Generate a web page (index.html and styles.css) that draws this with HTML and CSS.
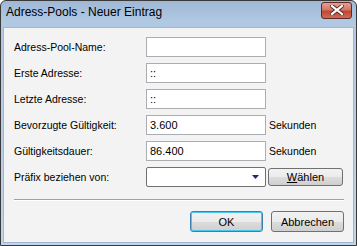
FILE: index.html
```html
<!DOCTYPE html>
<html lang="de">
<head>
    <meta charset="UTF-8">
    <title>Adress-Pools - Neuer Eintrag</title>
    <link rel="stylesheet" href="styles.css">
</head>
<body>
    <div class="window">
        <div class="titlebar">
            <span class="title">Adress-Pools - Neuer Eintrag</span>
            <button class="close" type="button" aria-label="Schließen">
                <svg width="14" height="10" viewBox="0 0 14 10">
                    <path d="M2 1 L12 9 M12 1 L2 9" stroke="#5a2a2a" stroke-width="4" stroke-linecap="square"/>
                    <path d="M2 1 L12 9 M12 1 L2 9" stroke="#fff" stroke-width="2.2" stroke-linecap="square"/>
                </svg>
            </button>
        </div>

        <div class="client">
            <form class="fields">
                <label for="poolName">Adress-Pool-Name:</label>
                <input type="text" id="poolName" class="field">
                <span></span>

                <label for="firstAddr">Erste Adresse:</label>
                <input type="text" id="firstAddr" class="field" value="::">
                <span></span>

                <label for="lastAddr">Letzte Adresse:</label>
                <input type="text" id="lastAddr" class="field" value="::">
                <span></span>

                <label for="preferred">Bevorzugte Gültigkeit:</label>
                <input type="text" id="preferred" class="field" value="3.600">
                <span class="unit">Sekunden</span>

                <label for="valid">Gültigkeitsdauer:</label>
                <input type="text" id="valid" class="field" value="86.400">
                <span class="unit">Sekunden</span>

                <label for="prefix">Präfix beziehen von:</label>
                <div class="combo" id="prefix">
                    <svg class="arrow" width="7" height="4" viewBox="0 0 7 4"><path d="M0 0 H7 L3.5 4 Z" fill="#1c2c6c"/></svg>
                </div>
                <button type="button" class="btn btn-small"><u>W</u>ählen</button>
            </form>

            <hr class="separator">

            <div class="actions">
                <button type="button" class="btn btn-default">OK</button>
                <button type="button" class="btn">Abbrechen</button>
            </div>
        </div>
    </div>
</body>
</html>
```

FILE: styles.css
```css
body {
    margin: 0;
    padding: 0;
    font-family: "Liberation Sans", Arial, sans-serif;
    font-size: 11px;
    color: #000;
    background: #fff;
}

.window {
    width: 357px;
    height: 246px;
    box-sizing: border-box;
    border: 1px solid #3a3a3a;
    border-radius: 6px 6px 0 0;
    background: linear-gradient(to bottom, #9fb8d6 0px, #b0c8e2 20px, #c0d4ea 100%);
    display: flex;
    flex-direction: column;
}

.titlebar {
    height: 26px;
    display: flex;
    align-items: center;
    justify-content: space-between;
    padding: 0 4px 0 5px;
    flex-shrink: 0;
}

.title {
    font-size: 12px;
    color: #000;
    margin-top: -4px;
}

.close {
    width: 31px;
    height: 17px;
    margin-top: -8px;
    padding: 0;
    border: 1px solid #5e2a2a;
    border-radius: 3px;
    background: linear-gradient(to bottom, #e3a093 0%, #d27766 45%, #c0472f 55%, #cf6a55 100%);
    display: flex;
    align-items: center;
    justify-content: center;
}

.client {
    flex: 1;
    margin: 0 2px 2px 2px;
    border: 1px solid #9fb7d2;
    background: #f3f3f3;
    padding: 9px 9px 0 10px;
}

.fields {
    display: grid;
    grid-template-columns: 132px 120px auto;
    row-gap: 6px;
    align-items: center;
    margin: 0;
}

.fields label {
    font-size: 10.5px;
}

.field,
.combo {
    height: 20px;
    box-sizing: border-box;
    border: 1px solid #abadb3;
    background: #fff;
    font-family: inherit;
    font-size: 11px;
    padding: 0 3px;
    margin: 0;
    outline: none;
}

.combo {
    display: flex;
    align-items: center;
    justify-content: flex-end;
    padding-right: 6px;
    border-color: #707070;
    border-radius: 2px;
}

.unit {
    padding-left: 3px;
    font-size: 10.5px;
}

.btn {
    height: 21px;
    width: 73px;
    box-sizing: border-box;
    border: 1px solid #707070;
    border-radius: 3px;
    background: linear-gradient(to bottom, #f2f2f2 0%, #ebebeb 50%, #dddddd 51%, #cfcfcf 100%);
    font-family: inherit;
    font-size: 11px;
    color: #000;
    padding: 0;
}

.btn-small {
    height: 18px;
    width: 75px;
    margin-left: 2px;
}

.btn-default {
    border-color: #3c7fb1;
    box-shadow: inset 0 0 0 1px #48c8f0;
}

.separator {
    margin: 12px 0 0 0;
    border: none;
    border-top: 1px solid #a0a0a0;
    border-bottom: 1px solid #fff;
}

.actions {
    display: flex;
    justify-content: flex-end;
    gap: 8px;
    margin-top: 10px;
}
```
